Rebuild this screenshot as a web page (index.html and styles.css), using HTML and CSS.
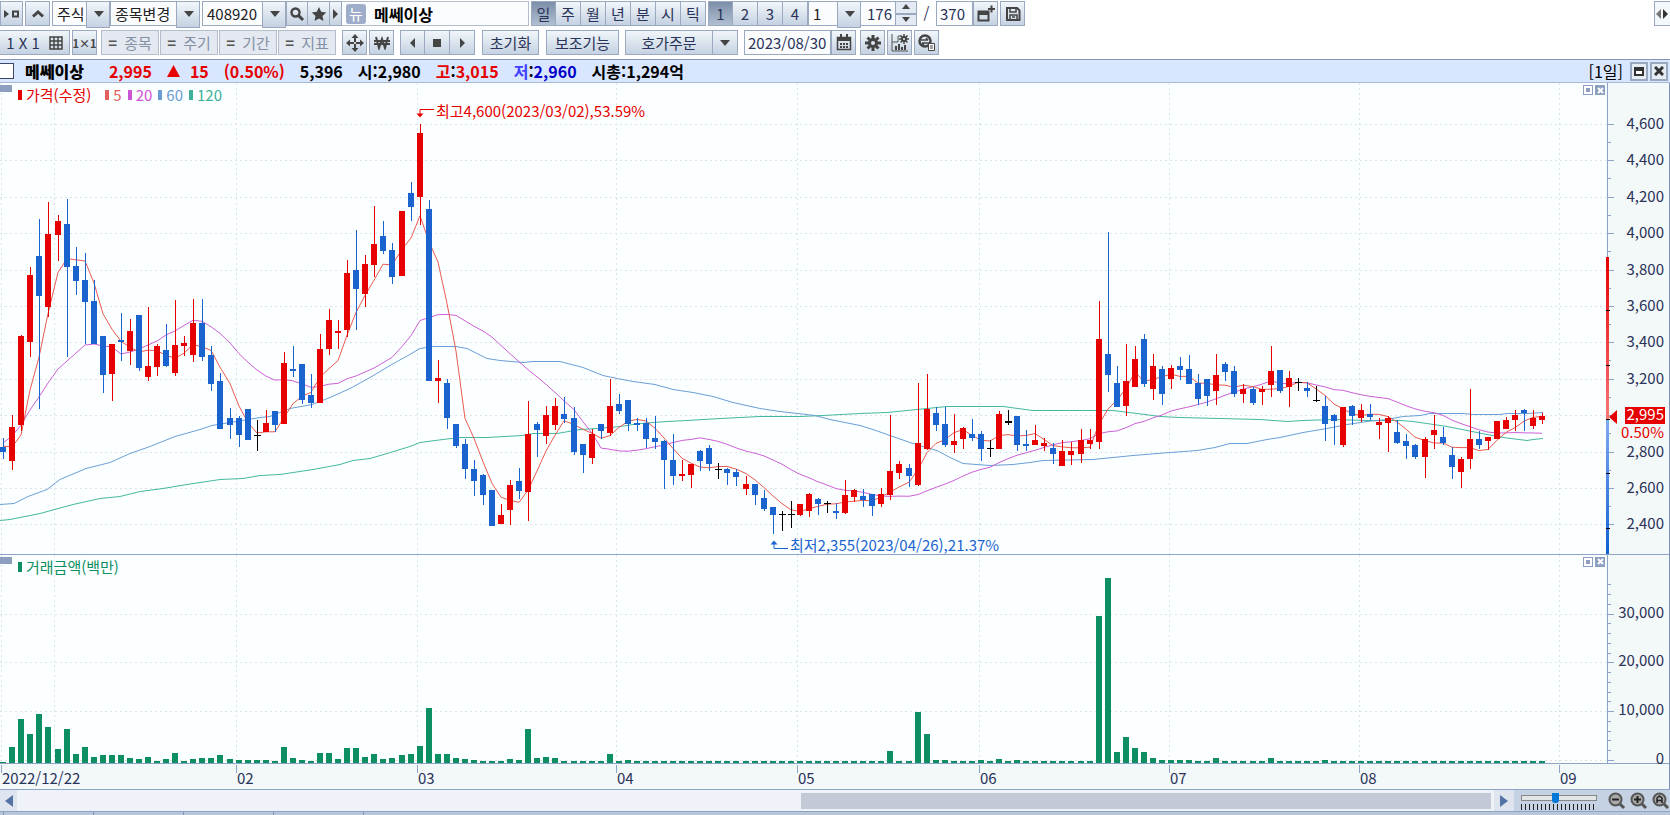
FILE: index.html
```
<!DOCTYPE html>
<html lang="ko">
<head>
  <meta charset="UTF-8" />
  <meta name="viewport" content="width=device-width, initial-scale=1.0"/>
  <title>종합차트 - 메쎄이상</title>
  <link rel="stylesheet" href="styles.css">
</head>
<body>
  <header class="toolbars">
    <div class="toolbar">
      <button class="btn first" aria-label="창 연결"><svg width="16" height="12"><path d="M0 2l5 4-5 4z" fill="#444"/><path d="M9 3.5h5v5h-5z" fill="none" stroke="#444" stroke-width="2"/></svg></button>
      <button class="btn" aria-label="접기"><svg width="14" height="10"><path d="M2 7.500L7 3l5 4.500" fill="none" stroke="#444" stroke-width="3"/></svg></button>
      <div class="group">
        <span class="combo w-market"><select aria-label="시장"><option>주식</option></select></span>
        <span class="combo w-change"><select aria-label="종목변경"><option>종목변경</option></select></span>
      </div>
      <div class="group code">
        <span class="combo w-code"><select aria-label="종목코드"><option>408920</option></select></span>
        <button class="btn" aria-label="검색"><svg width="16" height="16"><circle cx="6.500" cy="6.500" r="4" fill="none" stroke="#444" stroke-width="2.400"/><path d="M9.500 9.500l4.500 4.500" stroke="#444" stroke-width="3"/></svg></button>
        <button class="btn" aria-label="관심종목"><svg width="16" height="16"><path d="M8 1l2.200 4.800 5 .6-3.700 3.500 1 5.100L8 12.400 3.500 15l1-5.100L.8 6.400l5-.6z" fill="#444"/></svg></button>
        <button class="btn slim" aria-label="더보기"><svg width="6" height="12"><path d="M0 1l5 5-5 5z" fill="#444"/></svg></button>
        <div class="name-box"><span class="badge">뉴</span><strong>메쎄이상</strong></div>
      </div>
      <div class="group period">
        <button class="btn on">일</button><button class="btn">주</button><button class="btn">월</button><button class="btn">년</button><button class="btn">분</button><button class="btn">시</button><button class="btn">틱</button>
      </div>
      <div class="group">
        <button class="btn on">1</button><button class="btn">2</button><button class="btn">3</button><button class="btn">4</button>
        <span class="combo w-unit"><select aria-label="단위"><option>1</option></select></span>
        <input class="field w-count" type="text" value="176" aria-label="표시 개수">
        <span class="spin"><button aria-label="증가"><svg width="10" height="6"><path d="M5 0l4 5H1z" fill="#444"/></svg></button><button aria-label="감소"><svg width="10" height="6"><path d="M5 5l4-5H1z" fill="#444"/></svg></button></span>
      </div>
      <span class="slash">/</span>
      <div class="group">
        <input class="field w-total" type="text" value="370" aria-label="전체 개수">
        <button class="btn" aria-label="새 창"><svg width="18" height="18"><path d="M1.500 6.500h10v9h-10z" fill="none" stroke="#444" stroke-width="2"/><path d="M1 6h11v4H1z" fill="#444"/><path d="M11 4h7M14.500 .5v7" stroke="#444" stroke-width="2"/></svg></button>
      </div>
      <button class="btn" aria-label="저장"><svg width="16" height="16"><path d="M2 2h10l2.500 2.500V14H2z" fill="none" stroke="#444" stroke-width="2"/><path d="M5 2v4h6V2M5 14V9h7v5M7 11h3" fill="none" stroke="#444" stroke-width="1.500"/></svg></button>
      <button class="btn side" aria-label="도구모음 이동"><svg width="13" height="10"><path d="M5 0v10L0 5z" fill="#777"/><path d="M7 0v10l5-5z" fill="#333"/></svg></button>
    </div>

    <div class="toolbar">
      <button class="btn layout"><span>1 X 1</span><svg width="14" height="14"><path d="M1 1h12v12H1zM5 1v12M9 1v12M1 5h12M1 9h12" fill="none" stroke="#444" stroke-width="1.500"/></svg></button>
      <button class="btn tiny"><b>1×1</b></button>
      <div class="links">
        <button class="btn" disabled><b>=</b> 종목</button><button class="btn" disabled><b>=</b> 주기</button><button class="btn" disabled><b>=</b> 기간</button><button class="btn" disabled><b>=</b> 지표</button>
      </div>
      <button class="btn" aria-label="이동"><svg width="18" height="18"><path d="M9 3v12M3 9h12" stroke="#444" stroke-width="2"/><path d="M9 0l3.500 4h-7zM9 18l3.500-4h-7zM0 9l4-3.500v7zM18 9l-4-3.500v7z" fill="#444"/><circle cx="9" cy="9" r="1" fill="#fff"/></svg></button>
      <button class="btn" aria-label="원화"><svg width="16" height="14"><path d="M2 1l3 11L8 3l3 9 3-11M0 5h16M0 8h16" fill="none" stroke="#444" stroke-width="2"/></svg></button>
      <div class="group nav">
        <button class="btn" aria-label="이전"><svg width="8" height="12"><path d="M6 1v10L1 6z" fill="#444"/></svg></button><button class="btn" aria-label="정지"><svg width="8" height="8"><path d="M0 0h8v8H0z" fill="#444"/></svg></button><button class="btn" aria-label="다음"><svg width="8" height="12"><path d="M2 1v10l5-5z" fill="#444"/></svg></button>
      </div>
      <button class="btn w-reset">초기화</button>
      <button class="btn w-sub">보조기능</button>
      <div class="group order"><button class="btn w-order">호가주문</button><button class="btn" aria-label="주문 메뉴"><svg width="12" height="8"><path d="M1 1h10L6 7z" fill="#444"/></svg></button></div>
      <div class="group date">
        <input class="field w-date" type="text" value="2023/08/30" aria-label="기준일">
        <button class="btn" aria-label="달력"><svg width="16" height="17"><path d="M1.500 3.500h13v12h-13z" fill="none" stroke="#444" stroke-width="1.500"/><path d="M1 3h14v4H1zM4 0h2v3H4zM10 0h2v3h-2zM4 9h2v2H4zM7 9h2v2H7zM10 9h2v2h-2zM4 12h2v2H4zM7 12h2v2H7zM10 12h2v2h-2z" fill="#444"/></svg></button>
      </div>
      <button class="btn" aria-label="설정"><svg width="16" height="16"><path d="M8 0v16M0 8h16M2.500 2.500l11 11M13.500 2.500l-11 11" stroke="#444" stroke-width="3"/><circle cx="8" cy="8" r="5" fill="#444"/><circle cx="8" cy="8" r="2" fill="#dde6f0"/></svg></button>
      <button class="btn" aria-label="차트 설정"><svg width="18" height="18"><path d="M1 0v17h16M1 8h6V2h3" fill="none" stroke="#555"/><path d="M4 16v-4h2v4M7 16v-6h2v6M10 16v-3h2v3M13 16v-5h2v5" fill="#444"/><path d="M13 0v10M8 5h10M9.500 1.500l7 7M16.500 1.500l-7 7" stroke="#444" stroke-width="1.500"/><circle cx="13" cy="5" r="3" fill="#444"/><circle cx="13" cy="5" r="1" fill="#eee"/></svg></button>
      <button class="btn" aria-label="변환"><svg width="18" height="18"><circle cx="7" cy="7" r="5.500" fill="none" stroke="#444" stroke-width="2.500"/><path d="M3 6h7M8 4l2 2M11 9H4M6 11L4 9" stroke="#444" stroke-width="1.500"/><path d="M10.500 9.500h6v7h-6z" fill="#fff" stroke="#444"/><path d="M12 12h3M12 14h3" stroke="#444"/></svg></button>
    </div>
  </header>

  <section class="quote">
    <input type="checkbox" aria-label="종목 선택">
    <strong class="q-name">메쎄이상</strong>
    <span class="up">2,995</span>
    <span class="up q-change"><svg width="13" height="12"><path d="M6.500 0L13 12H0z" fill="#e60000"/></svg>15</span>
    <span class="up">(0.50%)</span>
    <span>5,396</span>
    <span>시:2,980</span>
    <span><span class="up">고</span>:<span class="up">3,015</span></span>
    <span><span class="low">저</span>:<span class="down">2,960</span></span>
    <span>시총:1,294억</span>
    <span class="q-period">[1일]</span>
    <button class="win" aria-label="최대화"><svg width="10" height="9"><path d="M1 1h8v7H1z" fill="#fff" stroke="#333" stroke-width="2"/><path d="M0 0h10v4H0z" fill="#333"/></svg></button>
    <button class="win" aria-label="닫기"><svg width="10" height="10"><path d="M1 1l8 8M9 1L1 9" stroke="#333" stroke-width="3"/></svg></button>
  </section>

  <main class="chart">
    <section class="panel price">
      <div class="plot">
        <svg id="pricePlot"></svg>
        <i class="tab"></i>
        <ul class="legend">
          <li class="c-price">가격(수정)</li><li class="c-5">5</li><li class="c-20">20</li><li class="c-60">60</li><li class="c-120">120</li>
        </ul>
        <div class="panel-buttons"><button class="restore" aria-label="가격창 복원"></button><button aria-label="가격창 닫기"><svg width="7" height="7"><path d="M1 1l5 5M6 1L1 6" stroke="#fff" stroke-width="2"/></svg></button></div>
      </div>
      <svg class="axis" id="priceAxis"></svg>
    </section>
    <section class="panel volume">
      <div class="plot">
        <svg id="volumePlot"></svg>
        <i class="tab"></i>
        <ul class="legend"><li class="c-volume">거래금액(백만)</li></ul>
        <div class="panel-buttons"><button class="restore" aria-label="거래금액창 복원"></button><button aria-label="거래금액창 닫기"><svg width="7" height="7"><path d="M1 1l5 5M6 1L1 6" stroke="#fff" stroke-width="2"/></svg></button></div>
      </div>
      <svg class="axis" id="volumeAxis"></svg>
    </section>
    <svg class="dates" id="dateAxis"></svg>
  </main>

  <footer>
    <div class="scroll">
      <button aria-label="왼쪽으로"><svg width="8" height="12"><path d="M8 0v12L0 6z" fill="#5572a5"/></svg></button>
      <div class="track"><div class="thumb"></div></div>
      <button class="right" aria-label="오른쪽으로"><svg width="8" height="12"><path d="M0 0v12l8-6z" fill="#5572a5"/></svg></button>
      <div class="zoom">
        <div class="slider"><input type="range" min="0" max="100" value="45" aria-label="확대 비율"><i></i></div>
        <button aria-label="축소"><svg width="18" height="18"><path d="M11 11l5 5" stroke="#555" stroke-width="3"/><circle cx="7.500" cy="7.500" r="6" fill="#aaa" stroke="#555" stroke-width="2"/><path d="M4 7.500h7" stroke="#222" stroke-width="2"/></svg></button>
        <button aria-label="확대"><svg width="18" height="18"><path d="M11 11l5 5" stroke="#555" stroke-width="3"/><circle cx="7.500" cy="7.500" r="6" fill="#aaa" stroke="#555" stroke-width="2"/><path d="M4 7.500h7M7.500 4v7" stroke="#222" stroke-width="2"/></svg></button>
        <button aria-label="전체 보기"><svg width="18" height="18"><path d="M11 11l5 5" stroke="#555" stroke-width="3"/><circle cx="7.500" cy="7.500" r="6" fill="#aaa" stroke="#555" stroke-width="2"/><path d="M5 11V6l2.500-2L10 6v5M5 8.500h5" fill="none" stroke="#222" stroke-width="1.500"/></svg></button>
      </div>
    </div>
    <div class="sheet-tabs"><i></i><i></i><i></i><i></i><i></i></div>
  </footer>

  <script src="chart.js"></script>
</body>
</html>
```

FILE: styles.css
```
* {
  box-sizing: border-box;
}

body {
  margin: 0;
  min-height: 100vh;
  display: flex;
  flex-direction: column;
  background: #fff;
  color: #2a3358;
  font-family: "Noto Sans CJK KR", sans-serif;
  font-size: 15px;
  line-height: 20px;
  overflow: hidden;
}

button, input, select {
  font: inherit;
  color: inherit;
  margin: 0;
  padding: 0;
  border-radius: 0;
}

svg {
  display: block;
}

/* toolbars */
.toolbars {
  display: flex;
  flex-direction: column;
  gap: 4px;
  padding: 1px 0 4px;
}

.toolbar {
  display: flex;
  gap: 2px;
  height: 25px;
}

.group, .links {
  display: flex;
}

.btn {
  display: flex;
  align-items: center;
  justify-content: center;
  flex: none;
  width: 25px;
  height: 25px;
  border: 1px solid #9aa9bf;
  background: linear-gradient(#f1f6fa, #c5d2e2);
  white-space: nowrap;
}

.group > .btn + .btn {
  border-left: 0;
}

.btn.first {
  width: 23px;
}

.btn.on {
  background: linear-gradient(#7d8ea8, #b0bfd2);
}

.btn.side {
  width: 16px;
  margin-left: auto;
  border-right: 0;
  background: #f3f8fc;
}

.btn:disabled {
  width: 58px;
  gap: 7px;
  color: #8590a5;
  border-color: #b3bdcc;
  background: #e4e9f1;
}

.btn:disabled b {
  color: #555;
}

.links {
  gap: 1px;
  margin: 0 4px 0 2px;
}

.layout {
  width: 70px;
  gap: 9px;
  border-left: 0;
}

.tiny {
  font-size: 11px;
  color: #444;
}

.combo {
  position: relative;
  height: 25px;
}

.combo select {
  width: 100%;
  height: 25px;
  padding: 0 24px 0 4px;
  border: 1px solid #9aa9bf;
  background: #fbfcfe;
  color: #222;
  appearance: none;
}

.combo::before {
  content: "";
  position: absolute;
  right: 0;
  top: 0;
  width: 22px;
  height: 25px;
  border: 1px solid #9aa9bf;
  background: linear-gradient(#f1f6fa, #c5d2e2);
  pointer-events: none;
}

.combo::after {
  content: "";
  position: absolute;
  right: 6px;
  top: 10px;
  border: 5px solid transparent;
  border-top: 6px solid #444;
  border-bottom: 0;
  pointer-events: none;
}

.w-market { width: 58px; }
.w-change { width: 90px; }
.w-code { width: 84px; }
.w-unit { width: 53px; }
.w-count { width: 35px; }
.w-total { width: 37px; }
.w-reset { width: 57px; }
.w-sub { width: 73px; }
.w-order { width: 88px; }
.w-date { width: 87px; }

.code .btn {
  width: 22px;
}

.code .btn.slim {
  width: 12px;
}

.name-box {
  display: flex;
  align-items: center;
  gap: 8px;
  width: 187px;
  padding-left: 4px;
  border: 1px solid #b3bdcc;
  border-left: 0;
  background: #fbfcfe;
  color: #000;
}

.name-box strong, .quote {
  font-size: 16px;
}

.badge {
  width: 20px;
  height: 20px;
  border-radius: 3px;
  background: #9dadca;
  color: #fff;
  text-align: center;
}

.field {
  height: 25px;
  padding: 0 3px;
  border: 1px solid #9aa9bf;
  background: #fbfcfe;
  color: #2a3358;
}

.w-count {
  border-left: 0;
  text-align: right;
}

.spin {
  display: flex;
  flex-direction: column;
  width: 21px;
}

.spin button {
  display: flex;
  align-items: center;
  justify-content: center;
  flex: 1;
  border: 1px solid #9aa9bf;
  border-left: 0;
  background: #e3eaf3;
}

.slash {
  width: 15px;
  text-align: center;
  line-height: 24px;
}

.nav, .order, .date {
  margin-left: 4px;
}

.w-reset, .w-sub {
  margin-left: 5px;
}

.date {
  margin-right: 2px;
}

/* quote line */
.quote {
  display: flex;
  align-items: center;
  gap: 15px;
  height: 24px;
  padding-right: 2px;
  border-top: 1px solid #8497b8;
  border-bottom: 1px solid #a8bad6;
  background: #d9e6ff;
  color: #000;
  font-weight: 700;
}

.quote input {
  appearance: none;
  width: 16px;
  height: 16px;
  margin: 0 -4px 0 -2px;
  border: 1px solid #3c4668;
  background: #fff;
}

.q-name { margin-right: 10px; }
.up { color: #e60000; }
.down { color: #0000c8; }
.low { color: #4040ff; }

.q-change {
  display: flex;
  align-items: center;
  gap: 10px;
}

.q-period {
  margin-left: auto;
  font-weight: 400;
}

.win {
  display: flex;
  align-items: center;
  justify-content: center;
  width: 18px;
  height: 19px;
  border: 2px solid #9aa9bf;
  background: #e6ecf3;
}

.win + .win {
  margin-left: -13px;
}

.q-period + .win {
  margin-left: -8px;
}

/* chart panels */
.chart {
  display: flex;
  flex-direction: column;
  flex: 1;
  border-right: 1px solid #7d93ba;
}

.panel {
  display: flex;
  min-height: 0;
  border-bottom: 1px solid #8ea3c8;
}

.price { flex: 472 0 0; }
.volume { flex: 209 0 0; }

.plot {
  position: relative;
  flex: 1;
  min-width: 0;
  background: #fcffff;
}

.plot > svg {
  position: absolute;
  width: 100%;
  height: 100%;
}

.axis {
  width: 63px;
  height: auto;
  background: #f3f8f9;
  overflow: visible;
}

.dates {
  width: 100%;
  height: 25px;
  background: #f3f8f9;
}

svg text {
  fill: #2a3358;
}

.tab {
  position: absolute;
  left: 0;
  top: 2px;
  width: 12px;
  height: 7px;
  background: #8c9fc0;
}

.legend {
  position: absolute;
  left: 18px;
  top: 2px;
  display: flex;
  gap: 6px;
  margin: 0;
  padding: 0;
  list-style: none;
}

.legend li {
  display: flex;
  align-items: center;
  gap: 4px;
}

.legend li::before {
  content: "";
  width: 4px;
  height: 10px;
  background: currentColor;
}

.c-price {
  margin-right: 8px;
  color: #e60000;
}

.c-5 { color: #e66060; }
.c-20 { color: #cc55d5; }
.c-60 { color: #6a9bd2; }
.c-120 { color: #3cb09a; }
.c-volume { color: #0d8f63; }

.panel-buttons {
  position: absolute;
  right: 1px;
  top: 2px;
  display: flex;
  gap: 2px;
}

.panel-buttons button {
  display: flex;
  align-items: center;
  justify-content: center;
  width: 10px;
  height: 10px;
  border: 0;
  background: #8c9fc0;
}

.panel-buttons .restore {
  border: 1px solid #8c9fc0;
  box-shadow: inset 0 0 0 2px #fff;
}

/* scroll bar and zoom */
.scroll {
  display: flex;
  height: 22px;
  border-top: 1px solid #8ea3c8;
  background: #eff3f9;
}

.scroll button {
  display: flex;
  align-items: center;
  justify-content: center;
  width: 17px;
  border: 0;
  background: #dfe5ee;
}

.scroll .right {
  width: 20px;
}

.track {
  flex: 1;
  padding: 3px 0;
}

.thumb {
  width: 46.7%;
  height: 16px;
  margin-left: 53.1%;
  background: #c3c9d6;
}

.zoom {
  display: flex;
  align-items: center;
  gap: 4px;
  padding-left: 7px;
  background: #c5d2e3;
}

.zoom button {
  width: 18px;
  background: none;
}

.slider {
  width: 76px;
  margin-right: 7px;
}

.slider input {
  display: block;
  appearance: none;
  width: 76px;
  height: 12px;
  background: none;
}

.slider input::-webkit-slider-runnable-track {
  height: 6px;
  border: 1px solid #888;
  background: #e2e6e4;
}

.slider input::-webkit-slider-thumb {
  appearance: none;
  width: 7px;
  height: 10px;
  margin-top: -3px;
  border-radius: 0 0 3px 3px;
  background: #0078d7;
}

.slider i {
  display: block;
  height: 6px;
  background: repeating-linear-gradient(90deg, #222 0 1px, transparent 1px 4px);
}

.sheet-tabs {
  display: flex;
  height: 4px;
  border-top: 1px solid #8ea3c8;
  background: #b9c6d8;
}

.sheet-tabs i {
  width: 90px;
  border-right: 1px solid #8094b5;
}

.sheet-tabs i:first-child {
  width: 4px;
}
```

FILE: chart.js
```
// [kind, high, body top, body bottom, low] in plot units, 83 is the top edge of the price panel
const candles = `b438,447,452,459 r415,427,461,470 r335,336,425,431 r267,275,342,357 b219,256,296,409 r202,234,307,317
r215,221,235,261 b199,224,267,357 b247,266,281,295 b253,280,302,344 b280,301,344,344 b336,336,375,393 r344,344,374,401
b313,340,342,361 r319,331,351,365 b315,315,368,371 r307,366,377,381 r344,346,367,376 b324,350,366,367 r300,345,373,376
r336,343,346,356 r299,323,355,362 b299,323,357,361 b346,355,384,391 b373,381,429,429 b408,418,425,439 b416,418,435,447
b409,409,440,440 k420,435,436,451 r410,423,432,432 b411,411,425,432 r352,363,424,424 b346,369,371,377 b364,364,400,404
b374,395,403,408 r334,349,403,403 r309,320,349,355 r320,331,332,349 r260,273,330,337 b230,270,289,330 r255,264,294,307
r206,244,265,277 b221,236,251,254 b243,250,277,284 r211,211,276,276 b182,193,207,221 r124,133,197,225 b200,209,381,381
r360,378,381,403 b379,383,418,429 b424,424,446,448 b439,444,469,479 b460,469,481,496 b474,475,495,505 b490,490,526,526
r504,515,524,524 r480,485,510,525 b468,481,491,499 r401,434,492,521 b422,424,430,457 r406,415,436,444 r398,406,425,430
b397,414,419,423 b407,418,452,455 b444,444,455,473 r429,434,458,464 b424,424,431,439 r379,406,433,436 b394,404,411,414
b400,400,424,431 b418,423,425,431 b418,423,439,448 b416,438,442,449 b440,441,460,489 b434,460,476,485 r460,474,476,481
r464,464,475,488 b450,451,461,471 b445,448,464,471 k463,469,470,479 b468,469,473,485 b469,472,477,486 r476,484,489,495
b484,484,495,505 b490,498,509,511 b507,507,515,534 k511,514,515,531 k501,514,515,528 r504,504,515,516 r493,494,511,517
b498,499,504,515 k501,503,504,513 b503,511,513,519 r480,495,513,514 r489,490,497,502 b489,496,500,507 b494,494,506,516
r488,494,504,507 r415,471,495,500 r461,464,473,479 b464,468,476,487 r383,443,485,486 r374,409,449,450 b407,413,425,431
b407,424,445,447 r414,441,445,453 r427,428,439,449 b419,434,438,441 b431,434,449,461 k440,448,449,457 r411,414,449,449
k410,421,423,425 b416,416,445,451 b430,444,446,451 r425,440,445,445 r438,443,446,451 b443,448,454,464 r440,451,466,466
r442,451,455,465 r429,440,454,463 r429,440,444,449 r301,339,442,449 b232,354,375,392 b366,383,407,407 r344,381,406,416
r346,359,387,387 b334,339,384,387 r354,366,389,400 b366,369,394,405 r365,368,379,389 b357,366,370,380 b355,369,384,384
b374,383,399,405 b379,379,396,406 r354,375,391,405 b362,364,372,381 b366,371,394,397 r384,389,394,403 b387,389,403,405
r386,389,392,405 r346,371,385,397 b370,370,391,393 r371,378,387,407 k378,382,383,391 b382,388,391,397 k386,400,401,402
b396,406,424,441 b414,415,421,445 r407,407,445,447 b405,406,416,425 r404,410,418,422 b404,414,417,420 r418,422,425,439
r416,418,423,452 b420,432,443,444 b434,441,446,459 b444,445,457,459 r437,439,457,478 r415,430,435,449 b427,437,443,445
b447,455,467,479 r457,459,472,488 r389,439,459,469 b431,439,445,449 r437,437,441,450 r421,421,439,439 r417,420,429,429
r410,415,420,431 b409,410,413,431 r410,418,426,429 r413,416,420,424`.split(/\s+/).map(s => [s[0], ...s.slice(1).split(',').map(Number)]);

// days before the average has enough candles of its own
const lead5 = [446, 447, 435, 390];
const lead20 = [443, 436, 425, 410, 397, 383, 369, 361, 353, 345, 344, 346, 347, 354, 352, 349, 345, 341, 335];

const ma60 = '0,504 14,503 28,496 47,489 60,479 86,468 110,462 130,453 150,446 175,436 200,429 212,425 236,421 260,417 270,416 290,408 312,404 330,397 350,388 370,377 390,365 408,355 420,348 433,346 456,346 467,348 487,358 500,360 523,362 533,361 560,361 583,367 603,375 617,378 633,381 655,384 673,389 693,392 713,396 733,402 760,408 780,411 815,415 830,419 860,425 873,429 890,435 910,442 923,446 937,450 950,457 963,463 990,465 1013,464 1030,462 1043,460 1093,459 1133,455 1170,452 1197,450 1215,447 1230,443 1247,443 1267,439 1280,437 1303,432 1327,428 1347,424 1367,421 1387,419 1403,416 1420,415 1430,413 1463,413 1473,414 1500,414 1507,413 1527,413 1543,412';
const ma120 = '0,520 10,519 40,513 73,504 100,498 120,496 140,491 163,488 187,484 220,479 243,478 260,475 280,474 313,469 340,464 353,460 370,458 387,453 410,446 420,442 443,439 460,437 487,437 523,435 533,433 557,433 580,429 597,428 620,426 640,423 667,421 687,420 720,418 760,416 800,416 823,415 860,413 887,412 917,409 947,406 1003,406 1033,410 1113,410 1137,413 1160,416 1180,417 1220,418 1260,419 1287,421 1303,420 1333,419 1367,420 1400,420 1413,421 1427,423 1447,426 1467,430 1487,434 1503,437 1527,440 1533,439 1543,438';

const volumes = new Array(171).fill(2);
[1, 16, 44, 29, 49, 36, 14, 34, 9, 16, 6, 8, 8, 8, 5, 4, 6, 2, 4, 10, 2, 4, 5, 5, 8, 4, 3, 3, 3, 3, 2, 16, 5, 3, 2, 10, 10, 4, 15, 15, 6, 9, 4, 5, 8, 9, 17, 55, 9, 9, 5, 4, 3, 2, 2, 2, 4, 3, 34, 5, 6, 5].forEach((v, i) => volumes[i] = v);
Object.assign(volumes, { 67: 9, 69: 3, 98: 12, 101: 51, 102: 29, 103: 3, 104: 3, 108: 3, 110: 4, 112: 3, 121: 147, 122: 185, 123: 11, 124: 26, 125: 15, 126: 11, 127: 5, 128: 3, 129: 3, 130: 3, 131: 3, 134: 5, 140: 5, 146: 3 });

const months = [[1, '2022/12/22'], [54, ''], [236, '02'], [417, '03'], [616, '04'], [797, '05'], [979, '06'], [1169, '07'], [1359, '08'], [1559, '09']];
const colors = { r: '#e60000', b: '#1a64d0', k: '#000' };

const line = (x1, y1, x2, y2, color, extra = '') =>
  `<line x1="${x1}" y1="${y1}" x2="${x2}" y2="${y2}" stroke="${color}" shape-rendering="crispEdges" ${extra}/>`;
const rect = (x, y, w, h, color) =>
  `<rect x="${x}" y="${y}" width="${w}" height="${h}" fill="${color}" shape-rendering="crispEdges"/>`;

function average(span, lead) {
  const closes = candles.map(c => c[0] === 'r' ? c[2] : c[3]);
  return closes.map((_, i) => {
    if (i < lead.length) return lead[i];
    return closes.slice(i - span + 1, i + 1).reduce((a, b) => a + b) / span;
  });
}

function draw() {
  const plot = document.getElementById('pricePlot');
  const W = plot.clientWidth;
  const H = plot.clientHeight;
  const VH = document.getElementById('volumePlot').clientHeight;
  const kx = W / 1606;
  const ky = H / 471;
  const kv = VH / 208;
  const X = x => Math.round(x * kx);
  const Y = y => Math.round((y - 83) * ky);
  const day = i => X(3.2 + i * 9.053);
  const grid = '#dde2e8';
  const dash = 'stroke-dasharray="2 3"';

  // price
  let s = '';
  let axis = '';
  months.forEach(m => s += line(X(m[0]) + .5, 0, X(m[0]) + .5, H, grid, dash));
  for (let i = 0; i < 12; i++) {
    const y = Y(124 + i * 36.4) + .5;
    s += line(0, y, W, y, grid, dash);
    axis += line(2, y, 8, y, '#8ea3c8');
    if (i < 11) axis += line(2, y + 18, 5, y + 18, '#8ea3c8');
    if (i !== 8) axis += `<text x="58" y="${y + 4}" text-anchor="end">${(4600 - i * 200).toLocaleString('en-US')}</text>`;
  }
  const path = (pts, color) => `<polyline points="${pts}" fill="none" stroke="${color}"/>`;
  const scaled = str => str.split(' ').map(p => p.split(',')).map(p => `${p[0] * kx},${(p[1] - 83) * ky + .5}`).join(' ');
  const daily = list => list.map((y, i) => `${day(i)},${(y - 83) * ky}`).join(' ');
  s += path(scaled(ma120), '#45b8a0') + path(scaled(ma60), '#6a9fd8');
  s += path(daily(average(20, lead20)), '#cc60d8') + path(daily(average(5, lead5)), '#ea5a50');
  candles.forEach(([kind, hi, top, bottom, lo], i) => {
    const x = day(i);
    s += line(x + .5, Y(hi), x + .5, Y(lo), colors[kind]);
    s += rect(x - 3, Y(top), kind === 'k' ? 7 : 6, Math.max(Y(bottom) - Y(top), kind === 'k' ? 1 : 2), colors[kind]);
  });
  const top = Y(109) + .5;
  const low = Y(548) + .5;
  s += `<path d="M${X(434)} ${top}H${X(420)}v5" fill="none" stroke="#e60000"/><path d="M${X(420)} ${top + 8}l-3.500 -4h7z" fill="#e60000"/>`;
  s += `<text x="${X(436)}" y="${top + 7}" style="fill:#e60000">최고4,600(2023/03/02),53.59%</text>`;
  s += `<path d="M${X(788)} ${low}H${X(774)}v-5" fill="none" stroke="#1a64d0"/><path d="M${X(774)} ${low - 8}l-3.500 4h7z" fill="#1a64d0"/>`;
  s += `<text x="${X(790)}" y="${low + 2}" style="fill:#1a64d0">최저2,355(2023/04/26),21.37%</text>`;
  plot.innerHTML = s;

  // day range strip and current price
  const now = Y(419);
  axis = `<defs><linearGradient id="up" x2="0" y2="1"><stop stop-color="#e60000"/><stop offset="1" stop-color="#f87878"/></linearGradient>
    <linearGradient id="dn" x2="0" y2="1"><stop stop-color="#80aaf0"/><stop offset="1" stop-color="#1060d0"/></linearGradient></defs>`
    + line(1.5, 0, 1.5, H, '#8ea3c8') + axis + rect(0, Y(257), 3, now - Y(257), 'url(#up)') + rect(0, now, 3, H - now, 'url(#dn)');
  [310, 365, 419, 473, 528].forEach(y => axis += rect(0, Y(y), 4, 1, '#000'));
  axis += `<path d="M3 ${now - 2}l8 -7v14z" fill="#e60000"/>` + rect(19, now - 12, 40, 17, '#e60000')
    + `<text x="58" y="${now + 1}" text-anchor="end" style="fill:#fff">2,995</text>`
    + `<text x="58" y="${now + 19}" text-anchor="end" style="fill:#e60000">0.50%</text>`;
  document.getElementById('priceAxis').innerHTML = axis;

  // traded value
  s = '';
  axis = line(1.5, 0, 1.5, VH, '#8ea3c8');
  const V = v => Math.round(VH - (3 + v * 4.88 / 1000) * kv);
  months.forEach(m => s += line(X(m[0]) + .5, 0, X(m[0]) + .5, VH, grid, dash));
  for (let v = 0; v <= 36000; v += 2000) {
    const major = v % 10000 === 0;
    const y = V(v) + .5;
    axis += line(2, y, major ? 8 : 5, y, '#8ea3c8');
    if (major) {
      s += line(0, y, W, y, grid, dash);
      axis += `<text x="58" y="${y + 3}" text-anchor="end">${v.toLocaleString('en-US')}</text>`;
    }
  }
  volumes.forEach((v, i) => s += rect(day(i) - 3, VH - v * kv, 6, v * kv, '#0d8f63'));
  document.getElementById('volumePlot').innerHTML = s;
  document.getElementById('volumeAxis').innerHTML = axis;

  s = '';
  months.filter(m => m[1]).forEach(([x, label]) => {
    s += line(X(x) + .5, 1, X(x) + .5, 9, '#8ea3c8') + `<text x="${X(x) + 1}" y="20">${label}</text>`;
  });
  document.getElementById('dateAxis').innerHTML = s;
}

draw();
window.addEventListener('resize', draw);
```
